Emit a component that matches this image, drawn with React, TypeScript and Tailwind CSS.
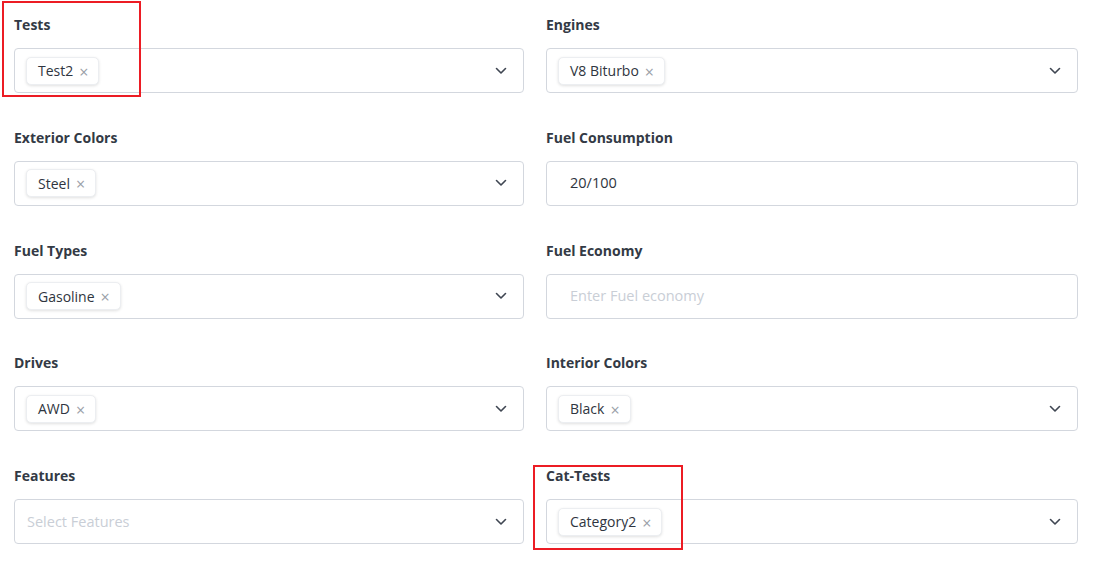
import React from "react";

type Field =
  | { label: string; kind: "select"; chip?: string; placeholder?: string }
  | { label: string; kind: "input"; value?: string; placeholder?: string };

const fields: Field[] = [
  { label: "Tests", kind: "select", chip: "Test2" },
  { label: "Engines", kind: "select", chip: "V8 Biturbo" },
  { label: "Exterior Colors", kind: "select", chip: "Steel" },
  { label: "Fuel Consumption", kind: "input", value: "20/100" },
  { label: "Fuel Types", kind: "select", chip: "Gasoline" },
  { label: "Fuel Economy", kind: "input", placeholder: "Enter Fuel economy" },
  { label: "Drives", kind: "select", chip: "AWD" },
  { label: "Interior Colors", kind: "select", chip: "Black" },
  { label: "Features", kind: "select", placeholder: "Select Features" },
  { label: "Cat-Tests", kind: "select", chip: "Category2" },
];

function Chevron() {
  return (
    <svg width="12" height="8" viewBox="0 0 12 8" fill="none" className="shrink-0">
      <path d="M1.5 1.5 L6 6 L10.5 1.5" stroke="#3f4652" strokeWidth="1.6" strokeLinecap="round" strokeLinejoin="round" />
    </svg>
  );
}

function Chip({ text }: { text: string }) {
  return (
    <span className="flex h-[28px] items-center rounded-[5px] border border-[#eceef1] bg-white pl-[11px] pr-[10px] text-[14px] text-[#2f3540] shadow-[0_1px_3px_rgba(0,0,0,0.12)]">
      {text}
      <span className="ml-[6px] mt-[2px] text-[16px] leading-none text-[#9aa0a8]">×</span>
    </span>
  );
}

function FieldBox({ f }: { f: Field }) {
  return (
    <div className="flex flex-col gap-[13px]">
      <div className="h-[21px] text-[14px] font-bold leading-[21px] text-[#333a45]">{f.label}</div>
      {f.kind === "select" ? (
        <div className="flex h-[45px] items-center rounded-[4px] border border-[#d3d7de] bg-white pl-[11px] pr-[16px]">
          <div className="flex flex-1 items-center">
            {f.chip ? (
              <Chip text={f.chip} />
            ) : (
              <span className="pl-[1px] text-[14.5px] text-[#c9ced6]">{f.placeholder}</span>
            )}
          </div>
          <Chevron />
        </div>
      ) : (
        <div className="flex h-[45px] items-center rounded-[4px] border border-[#d3d7de] bg-white pl-[23px]">
          {f.value ? (
            <span className="text-[14.5px] text-[#2f3540]">{f.value}</span>
          ) : (
            <span className="text-[14.5px] text-[#c9ced6]">{f.placeholder}</span>
          )}
        </div>
      )}
    </div>
  );
}

export default function App() {
  return (
    <div
      className="relative min-h-[564px] w-[1097px] bg-white"
      style={{ fontFamily: '"Open Sans", "Noto Sans", sans-serif' }}
    >
      <div className="grid grid-cols-[510px_532px] gap-x-[22px] gap-y-[33.75px] px-[14px] pt-[14px]">
        {fields.map((f) => (
          <FieldBox key={f.label} f={f} />
        ))}
      </div>
      {/* highlight frames */}
      <div className="pointer-events-none absolute left-[2px] top-[1px] h-[96px] w-[139px] border-2 border-[#ec1c24]" />
      <div className="pointer-events-none absolute left-[533px] top-[465px] h-[85px] w-[150px] border-2 border-[#ec1c24]" />
    </div>
  );
}
